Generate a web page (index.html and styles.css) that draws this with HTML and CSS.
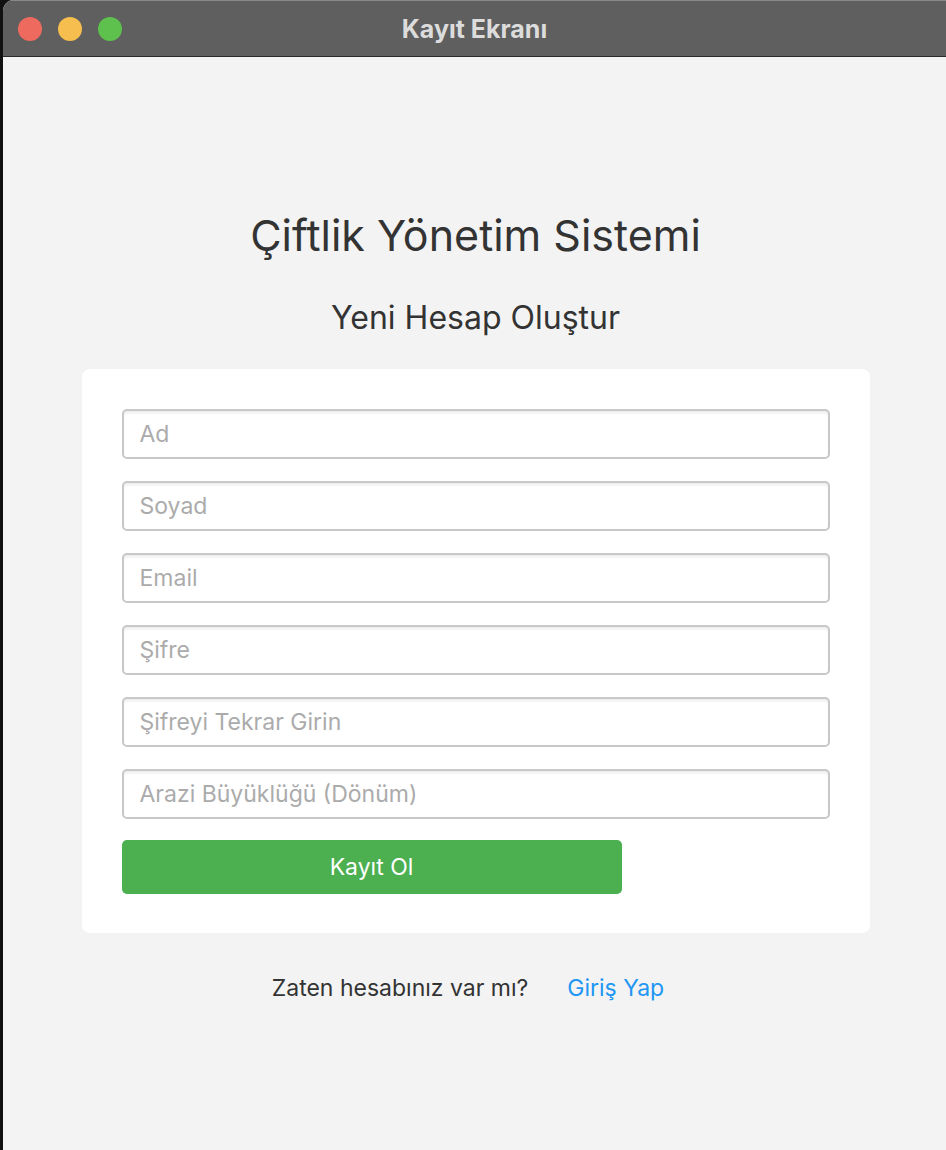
FILE: index.html
```html
<!DOCTYPE html>
<html lang="tr">
<head>
<meta charset="utf-8">
<title>Kayıt Ekranı</title>
<link rel="stylesheet" href="styles.css">
</head>
<body>
<div class="window">
  <header class="titlebar">
    <div class="lights">
      <span class="light red"></span>
      <span class="light yellow"></span>
      <span class="light green"></span>
    </div>
    <div class="title">Kayıt Ekranı</div>
  </header>
  <main class="content">
    <h1 class="heading">Çiftlik Yönetim Sistemi</h1>
    <h2 class="subheading">Yeni Hesap Oluştur</h2>
    <form class="card">
      <input class="field" type="text" placeholder="Ad">
      <input class="field" type="text" placeholder="Soyad">
      <input class="field" type="text" placeholder="Email">
      <input class="field" type="password" placeholder="Şifre">
      <input class="field" type="password" placeholder="Şifreyi Tekrar Girin">
      <input class="field" type="text" placeholder="Arazi Büyüklüğü (Dönüm)">
      <button class="submit" type="button">Kayıt Ol</button>
    </form>
    <div class="footer">
      <span class="question">Zaten hesabınız var mı?</span>
      <a class="login" href="#">Giriş Yap</a>
    </div>
  </main>
</div>
</body>
</html>
```
FILE: styles.css
```css
* { box-sizing: border-box; }
html, body {
  margin: 0;
  padding: 0;
  background: #111;
  height: 1150px;
  overflow: hidden;
}
body {
  font-family: Inter, "Noto Sans", "Liberation Sans", sans-serif;
  padding-left: 3px;
}
.window {
  height: 1150px;
  background: #f3f3f3;
  border-top-left-radius: 11px;
  overflow: hidden;
  display: flex;
  flex-direction: column;
}
.titlebar {
  height: 57px;
  background: #5f5f5f;
  border-top: 1px solid #8a8a8a;
  border-bottom: 1px solid #2a2a2a;
  display: flex;
  align-items: center;
  position: relative;
  flex-shrink: 0;
}
.lights {
  display: flex;
  gap: 16px;
  padding-left: 15px;
}
.light {
  width: 24px;
  height: 24px;
  border-radius: 50%;
  display: block;
}
.light.red { background: #ee6a5f; }
.light.yellow { background: #f5be4f; }
.light.green { background: #5ec14e; }
.title {
  position: absolute;
  left: 0;
  right: 0;
  text-align: center;
  color: #dcdcdc;
  font-weight: 700;
  font-size: 25px;
  pointer-events: none;
}
.content {
  display: flex;
  flex-direction: column;
  align-items: center;
  padding-top: 150px;
  padding-left: 2px;
}
.heading {
  margin: 0;
  font-weight: 400;
  font-size: 43px;
  color: #333;
  line-height: 56px;
}
.subheading {
  margin: 34px 0 0;
  font-weight: 400;
  font-size: 32px;
  color: #333;
  line-height: 42px;
}
.card {
  margin: 30px 0 0;
  width: 788px;
  background: #fff;
  border-radius: 8px;
  padding: 40px 40px 39px;
  display: flex;
  flex-direction: column;
  gap: 22px;
}
.field {
  width: 708px;
  height: 50px;
  border: 2px solid #c8c8c8;
  border-radius: 5px;
  background: #fff;
  box-shadow: inset 0 3px 3px -1px rgba(0,0,0,0.08);
  padding: 0 16px;
  font-family: inherit;
  font-size: 23px;
  color: #333;
  outline: none;
}
.field::placeholder { color: #ababab; }
.submit {
  width: 500px;
  height: 54px;
  border: none;
  border-radius: 5px;
  background: #4caf50;
  color: #fff;
  font-family: inherit;
  font-size: 23px;
  margin-top: -1px;
}
.footer {
  margin-top: 38px;
  padding-right: 15px;
  display: flex;
  gap: 39px;
  font-size: 23px;
  line-height: 34px;
}
.question { color: #333; }
.login { color: #2196f3; text-decoration: none; }
```
